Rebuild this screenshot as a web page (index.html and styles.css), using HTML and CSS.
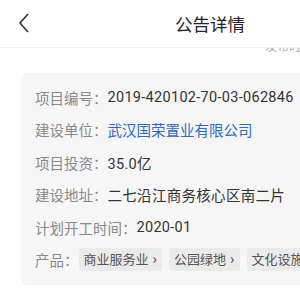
FILE: index.html
```html
<!DOCTYPE html>
<html lang="zh">
<head>
    <meta charset="UTF-8">
    <meta name="viewport" content="width=device-width, initial-scale=1.0">
    <title>公告详情</title>
    <link rel="stylesheet" href="styles.css">
</head>
<body>
    <header class="nav-bar">
        <a class="back" href="#">
            <svg width="14" height="22" viewBox="0 0 14 22">
                <path d="M10 2 L2 11 L10 20" fill="none" stroke="#333" stroke-width="1.6"/>
            </svg>
        </a>
        <h1 class="title">公告详情</h1>
    </header>

    <div class="meta"><span>发布时间</span></div>

    <main class="card">
        <div class="row"><span class="label">项目编号：</span><span class="value">2019-420102-70-03-062846</span></div>
        <div class="row"><span class="label">建设单位：</span><span class="value link">武汉国荣置业有限公司</span></div>
        <div class="row"><span class="label">项目投资：</span><span class="value">35.0亿</span></div>
        <div class="row"><span class="label">建设地址：</span><span class="value">二七沿江商务核心区南二片</span></div>
        <div class="row"><span class="label">计划开工时间：</span><span class="value">2020-01</span></div>
        <div class="row">
            <span class="label">产品：</span>
            <div class="tags">
                <span class="tag">商业服务业<i class="arrow">›</i></span>
                <span class="tag">公园绿地<i class="arrow">›</i></span>
                <span class="tag">文化设施<i class="arrow">›</i></span>
            </div>
        </div>
    </main>
</body>
</html>
```

FILE: styles.css
```css
body {
    margin: 0;
    width: 300px;
    height: 300px;
    overflow: hidden;
    background-color: #fff;
    font-family: Roboto, "Noto Sans CJK SC", sans-serif;
    color: #333;
}
.nav-bar {
    display: flex;
    align-items: center;
    height: 47px;
    border-bottom: 1px solid #f1f1f1;
    position: relative;
    z-index: 1;
    background-color: #fff;
}
.back {
    display: flex;
    margin-left: 18px;
    margin-top: -1px;
}
.title {
    margin: 0 0 0 143px;
    font-size: 17.5px;
    font-weight: normal;
    color: #222;
    white-space: nowrap;
}
.meta {
    height: 5px;
    overflow: hidden;
    padding-left: 265px;
    font-size: 12px;
    color: #aaa;
    white-space: nowrap;
}
.meta span {
    display: block;
    line-height: 12px;
    margin-top: -7px;
}
.card {
    margin: 20px -40px 0 21px;
    padding: 8px 0 9px 14px;
    background-color: #f6f6f6;
    border-radius: 6px;
}
.row {
    display: flex;
    align-items: center;
    height: 32.5px;
    font-size: 14.5px;
    white-space: nowrap;
}
.label {
    color: #8a8a8a;
}
.value {
    color: #333;
    letter-spacing: 0.3px;
}
.link {
    color: #2b6cc4;
    letter-spacing: 0;
}
.tags {
    display: flex;
    gap: 7px;
}
.tag {
    padding: 3px 5px;
    font-size: 13px;
    line-height: 16px;
    color: #555;
    background-color: #ebebeb;
    border-radius: 3px;
}
.arrow {
    font-style: normal;
    font-size: 15px;
    margin-left: 4px;
}
```
